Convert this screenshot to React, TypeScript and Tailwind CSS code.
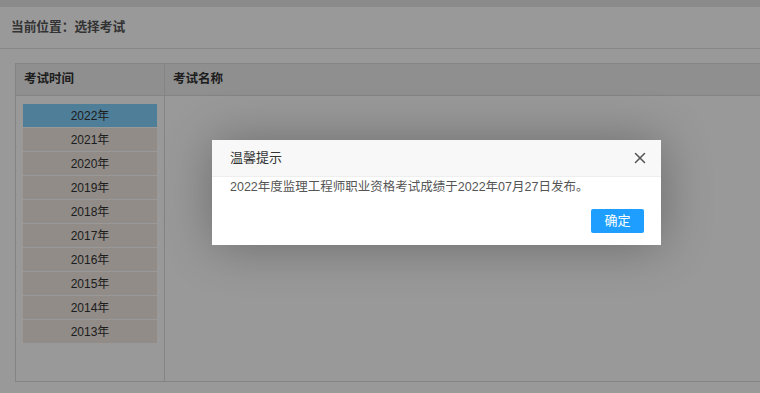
import { X } from 'lucide-react';

const years = ['2022', '2021', '2020', '2019', '2018', '2017', '2016', '2015', '2014', '2013'];

export default function App() {
  return (
    <div
      className="relative w-[760px] h-[393px] overflow-hidden bg-white text-[#333]"
      style={{ fontFamily: '"Liberation Sans", "Noto Sans CJK SC", sans-serif' }}
    >
      {/* top strip */}
      <div className="h-[7px] bg-[#e8e8e8]" />

      {/* breadcrumb */}
      <div className="h-[42px] flex items-center pl-[11px] border-b border-[#e2e2e2] text-[12.7px] font-bold text-[#555]">
        当前位置：选择考试
      </div>

      {/* table */}
      <div className="pl-[15px] pt-[14px]">
        <div className="w-[760px] border border-[#ddd]">
          <div className="flex h-[32px] bg-[#eeeeee] border-b border-[#ddd] text-[12.5px] font-bold text-[#333]">
            <div className="w-[149px] border-r border-[#ddd] flex items-center pl-[8px]">考试时间</div>
            <div className="flex-1 flex items-center pl-[8px]">考试名称</div>
          </div>
          <div className="flex h-[285px]">
            <div className="w-[149px] border-r border-[#ddd] pt-[8px] pl-[7px]">
              <div className="w-[134px] flex flex-col gap-px">
                {years.map((y, i) => (
                  <div
                    key={y}
                    className={
                      i === 0
                        ? 'h-[23px] flex items-center justify-center bg-[#84d4fd] text-[12px] text-[#333]'
                        : 'h-[23px] flex items-center justify-center bg-[#f2e9e1] text-[12px] text-[#333]'
                    }
                  >
                    {y}年
                  </div>
                ))}
              </div>
            </div>
            <div className="flex-1" />
          </div>
        </div>
      </div>

      {/* shade */}
      <div className="absolute inset-0 bg-black/40" />

      {/* dialog */}
      <div className="absolute left-[212px] top-[140px] w-[449px] bg-white shadow-[1px_1px_50px_rgba(0,0,0,0.3)]">
        <div className="h-[37px] flex items-center justify-between bg-[#f8f8f8] border-b border-[#eee] pl-[18px] pr-[12px]">
          <span className="text-[13px] text-[#333]">温馨提示</span>
          <X className="w-[18px] h-[18px] text-[#555]" strokeWidth={2} />
        </div>
        <div className="pl-[18px] pt-[1px] text-[12.5px] leading-[18px] text-[#555]">
          2022年度监理工程师职业资格考试成绩于2022年07月27日发布。
        </div>
        <div className="flex justify-end pr-[17px] pt-[13px] pb-[12px]">
          <button className="w-[53px] h-[24px] bg-[#1e9fff] text-white text-[13px] rounded-[2px]">确定</button>
        </div>
      </div>
    </div>
  );
}
